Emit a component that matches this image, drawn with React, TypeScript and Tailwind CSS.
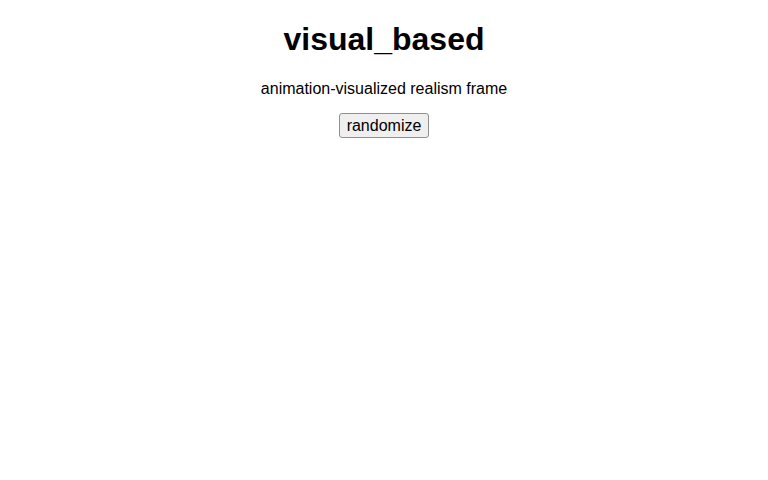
import { useState } from "react";

export default function App() {
  const [seed, setSeed] = useState(0);

  return (
    <div className="min-h-screen bg-white pt-[21.44px] text-center font-['Liberation_Sans',Arial,sans-serif] text-black" data-seed={seed}>
      <h1 className="text-[32px] leading-[36.8px] font-bold">visual_based</h1>
      <p className="mt-[21.44px] mb-[15px] text-base leading-[18.4px]">animation-visualized realism frame</p>
      <div>
        <button
          type="button"
          onClick={() => setSeed((s) => s + 1)}
          className="rounded-[3px] border border-[#8f8f8f] bg-[#efefef] px-[7px] py-[1px] text-base leading-[21px] text-black hover:bg-[#e5e5e5]"
        >
          randomize
        </button>
      </div>
    </div>
  );
}
